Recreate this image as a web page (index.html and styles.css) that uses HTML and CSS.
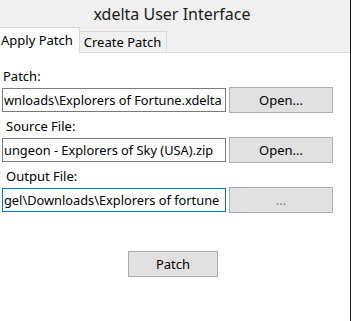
FILE: index.html
```html
<!DOCTYPE html>
<html lang="en">
<head>
  <meta charset="UTF-8" />
  <title>xdelta User Interface</title>
  <link rel="stylesheet" href="styles.css">
</head>
<body>
  <div class="window">
    <!-- Title + tab strip -->
    <div class="chrome">
      <div class="title">xdelta User Interface</div>
      <div class="tabs">
        <span class="tab active">Apply Patch</span>
        <span class="tab">Create Patch</span>
      </div>
    </div>

    <!-- Apply Patch panel -->
    <div class="panel">
      <div class="field">
        <label class="label">Patch:</label>
        <div class="row">
          <input class="path" type="text" value="wnloads\Explorers of Fortune.xdelta" readonly>
          <button class="btn">Open...</button>
        </div>
      </div>
      <div class="field">
        <label class="label indent">Source File:</label>
        <div class="row">
          <input class="path" type="text" value="ungeon - Explorers of Sky (USA).zip" readonly>
          <button class="btn">Open...</button>
        </div>
      </div>
      <div class="field">
        <label class="label indent">Output File:</label>
        <div class="row">
          <input class="path focused" type="text" value="gel\Downloads\Explorers of fortune" readonly>
          <button class="btn muted">...</button>
        </div>
      </div>
      <div class="actions">
        <button class="btn patch">Patch</button>
      </div>
    </div>
  </div>
</body>
</html>
```

FILE: styles.css
```css
body {
  margin: 0;
  font-family: "Noto Sans", "Open Sans", sans-serif;
  font-size: 13px;
  color: #000;
  background-color: #fff;
}
.window {
  width: 350px;
  height: 321px;
  border-right: 1px solid #1a1a1a;
  overflow: hidden;
}
.chrome {
  background-color: #f0f0f0;
}
.title {
  height: 27px;
  line-height: 28px;
  text-align: center;
  font-size: 16px;
  color: #1a1a1a;
  padding-right: 6px;
}
.tabs {
  display: flex;
  align-items: flex-end;
  height: 25px;
  border-bottom: 1px solid #d9d9d9;
}
.tab {
  height: 21px;
  line-height: 21px;
  padding: 0 5px 0 4px;
  border: 1px solid #d9d9d9;
  border-bottom: none;
  margin-bottom: -1px;
}
.tab.active {
  height: 25px;
  line-height: 24px;
  background-color: #fff;
  margin-left: -3px;
  padding: 0 6px 0 3px;
}
.tab + .tab {
  border-left: none;
}
.panel {
  padding: 10px 0 0 2px;
}
.label {
  display: block;
  height: 16px;
  line-height: 16px;
  padding: 5px 0 3px 1px;
}
.label.indent {
  padding-left: 4px;
}
.row {
  display: flex;
  align-items: center;
  gap: 3px;
  height: 26px;
}
.path {
  width: 224px;
  height: 24px;
  box-sizing: border-box;
  border: 1px solid #7a7a7a;
  padding: 0 1px;
  font-family: inherit;
  font-size: 12.8px;
  color: #000;
  outline: none;
}
.path.focused {
  border-color: #0078d7;
}
.btn {
  width: 104px;
  height: 26px;
  box-sizing: border-box;
  background-color: #e1e1e1;
  border: 1px solid #adadad;
  font-family: inherit;
  font-size: 13px;
  color: #000;
  padding: 0;
}
.btn.muted {
  color: #838383;
}
.actions {
  display: flex;
  padding: 38px 0 0 126px;
}
.btn.patch {
  width: 90px;
}
```
